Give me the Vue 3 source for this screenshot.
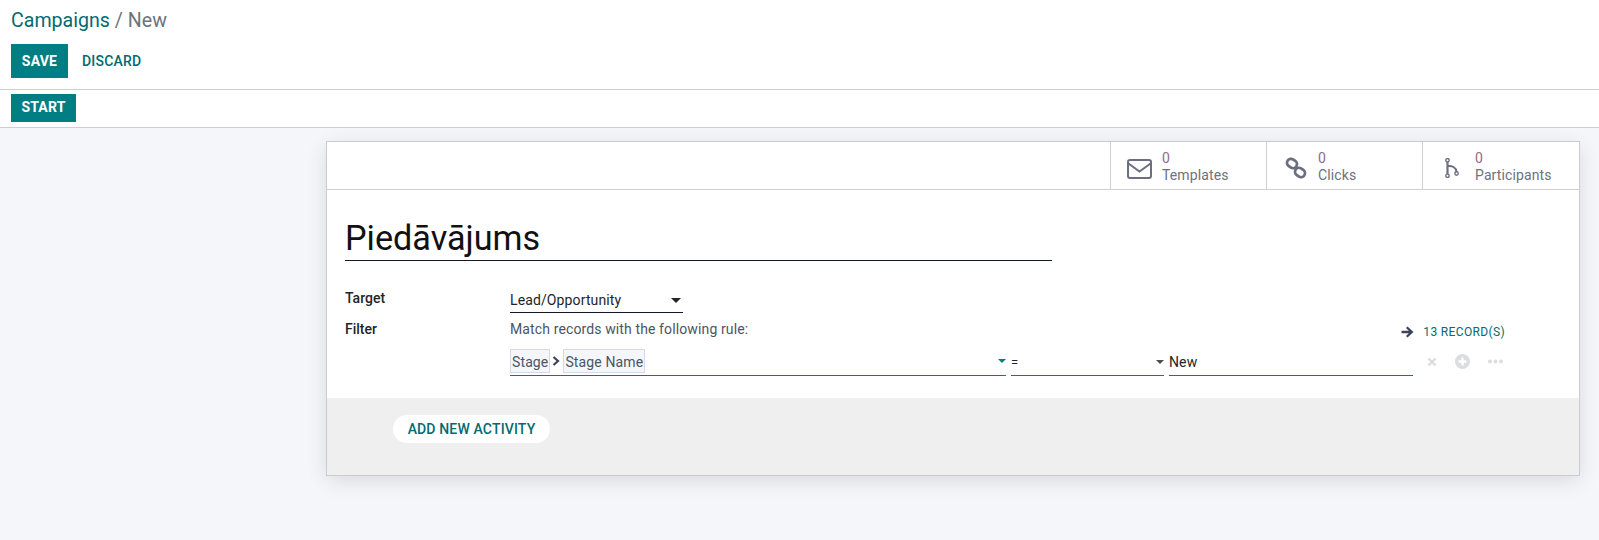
<script setup>
const stats = [
  { label: 'Templates', icon: 'mail' },
  { label: 'Clicks', icon: 'link' },
  { label: 'Participants', icon: 'branch' }
]
</script>

<template>
  <div class="page">
    <header class="head">
      <div class="crumbs"><span class="crumb-link">Campaigns</span><span class="crumb-rest"> / New</span></div>
      <div class="actions">
        <button class="btn save">SAVE</button>
        <button class="btn discard">DISCARD</button>
      </div>
    </header>
    <div class="status">
      <button class="btn start">START</button>
    </div>
    <main class="sheet-wrap">
      <section class="sheet">
        <div class="stats">
          <div v-for="s in stats" :key="s.label" class="stat" :class="'stat-' + s.icon">
            <svg v-if="s.icon === 'mail'" class="ico" width="25" height="20" viewBox="0 0 25 20" fill="none" stroke="#6b6f80" stroke-width="2">
              <rect x="1" y="1" width="23" height="18" rx="2" />
              <path d="M1.5 4.5 L12.5 12.5 L23.5 4.5" />
            </svg>
            <svg v-else-if="s.icon === 'link'" class="ico" width="22" height="22" viewBox="0 0 22 22" fill="none" stroke="#6b6f80" stroke-width="2.8">
              <rect x="1.8" y="2.5" width="10.4" height="8" rx="4" transform="rotate(35 7 6.5)" />
              <rect x="9.8" y="11.5" width="10.4" height="8" rx="4" transform="rotate(35 15 15.5)" />
            </svg>
            <svg v-else class="ico" width="14" height="20" viewBox="0 0 14 20" fill="none" stroke="#6b6f80" stroke-width="1.4">
              <circle cx="2.5" cy="2.2" r="1.7" />
              <circle cx="2.5" cy="17.8" r="1.7" />
              <circle cx="11.5" cy="15.5" r="1.7" />
              <path d="M2.5 4 V16" stroke-width="2.2" />
              <path d="M2.5 8 C7 7.5 11 9.5 11.5 13.8" stroke-width="2" />
            </svg>
            <div class="stat-text">
              <span class="num">0</span>
              <span class="lab">{{ s.label }}</span>
            </div>
          </div>
        </div>
        <div class="body">
          <div class="title">Piedāvājums</div>
          <div class="row target-row">
            <label class="label">Target</label>
            <div class="select">
              <span>Lead/Opportunity</span>
              <i class="caret dark"></i>
            </div>
          </div>
          <div class="row filter-row">
            <label class="label">Filter</label>
            <div class="filter">
              <div class="filter-head">
                <span class="rule">Match records with the following rule:</span>
                <span class="records">
                  <svg width="13" height="12" viewBox="0 0 13 12" fill="#3f4358"><path d="M6.5 0.5 L12.5 6 L6.5 11.5 L5 10 L7.8 7.2 H0.5 V4.8 H7.8 L5 2 Z" /></svg>
                  <span>13 RECORD(S)</span>
                </span>
              </div>
              <div class="rule-row">
                <div class="field path">
                  <span class="chip">Stage</span>
                  <svg class="chev" width="8" height="10" viewBox="0 0 8 10" fill="none" stroke="#3f4358" stroke-width="2.2"><path d="M1.5 1 L6 5 L1.5 9" /></svg>
                  <span class="chip">Stage Name</span>
                  <i class="caret teal small push"></i>
                </div>
                <div class="field op">
                  <span>=</span>
                  <i class="caret grey small push"></i>
                </div>
                <div class="field val">New</div>
                <div class="tools">
                  <svg width="10" height="10" viewBox="0 0 10 10" stroke="#dcdde1" stroke-width="2.4"><path d="M1.5 1.5 L8.5 8.5 M8.5 1.5 L1.5 8.5" /></svg>
                  <svg width="15" height="15" viewBox="0 0 15 15"><circle cx="7.5" cy="7.5" r="7.5" fill="#dcdde1" /><path d="M7.5 3.5 V11.5 M3.5 7.5 H11.5" stroke="#fff" stroke-width="2.4" /></svg>
                  <svg width="15" height="5" viewBox="0 0 15 5" fill="#dcdde1"><circle cx="2" cy="2.5" r="2" /><circle cx="7.5" cy="2.5" r="2" /><circle cx="13" cy="2.5" r="2" /></svg>
                </div>
              </div>
            </div>
          </div>
        </div>
        <div class="band">
          <button class="pill">ADD NEW ACTIVITY</button>
        </div>
      </section>
    </main>
  </div>
</template>

<style>
html, body { margin: 0; background: #f5f6fa; }
</style>

<style scoped>
.page {
  font-family: Roboto, "Liberation Sans", sans-serif;
  font-size: 14px;
  letter-spacing: 0.12px;
  color: #4c4c4c;
  height: 540px;
  overflow: hidden;
  background: #f5f6fa;
}
.head {
  height: 90px;
  box-sizing: border-box;
  background: #fff;
  border-bottom: 1px solid #cdced6;
  padding: 8px 11px 0;
}
.crumbs { font-size: 19.6px; line-height: 26px; height: 36px; letter-spacing: 0; }
.crumb-link { color: #016b70; }
.crumb-rest { color: #6b7280; }
.actions { display: flex; align-items: center; gap: 0; }
.btn {
  font-family: inherit;
  font-weight: 500;
  font-size: 14px;
  letter-spacing: 0.2px;
  border: 0;
  padding: 0 0 1px;
  cursor: pointer;
}
.save { width: 57px; height: 34px; background: #017e84; color: #fff; font-weight: 700; }
.discard { margin-left: 14px; background: none; color: #016b70; height: 34px; }
.status {
  height: 38px;
  box-sizing: border-box;
  background: #fff;
  border-bottom: 1px solid #cdced6;
  padding: 4px 11px 0;
}
.start { width: 65px; height: 28px; background: #017e84; color: #fff; font-weight: 700; display: block; padding-bottom: 2px; }
.sheet-wrap { padding: 13px 19px 0 326px; }
.sheet {
  box-sizing: border-box;
  height: 335px;
  background: #fff;
  border: 1px solid #c9cad2;
  box-shadow: 0 5px 20px -1px rgba(0, 0, 0, 0.12);
  display: flex;
  flex-direction: column;
}
.stats {
  height: 48px;
  flex: none;
  box-sizing: border-box;
  border-bottom: 1px solid #cdced6;
  display: flex;
  justify-content: flex-end;
}
.stat {
  width: 156px;
  box-sizing: border-box;
  border-left: 1px solid #cdced6;
  display: flex;
  align-items: center;
  padding-left: 16px;
  gap: 10px;
}
.stat-branch { width: 157px; padding-left: 22px; gap: 16px; }
.stat-link { padding-left: 18px; gap: 11px; }
.stat-mail .ico { margin-top: 6px; }
.stat-link .ico { margin-top: 4px; }
.stat-branch .ico { margin-top: 4px; }
.stat-text { display: flex; flex-direction: column; align-self: flex-start; padding-top: 8px; }
.num { color: #875a7b; font-weight: 400; font-size: 14px; line-height: 17px; opacity: 0.9; }
.lab { color: #6b7280; font-size: 14px; line-height: 17px; }
.body { flex: 1; padding: 27px 0 0 18px; }
.title {
  width: 707px;
  height: 44px;
  box-sizing: border-box;
  border-bottom: 1px solid #111827;
  font-size: 34.2px;
  letter-spacing: 0;
  line-height: 43px;
  color: #111;
}
.row { display: flex; }
.label { width: 165px; flex: none; font-weight: 500; color: #212529; line-height: 20px; letter-spacing: 0; }
.target-row { margin-top: 27px; height: 31px; }
.select {
  width: 173px;
  height: 23px;
  box-sizing: border-box;
  border-bottom: 1px solid #111827;
  display: flex;
  align-items: center;
  justify-content: space-between;
  color: #212529;
  padding-right: 2px;
  margin-top: 2px;
  padding-bottom: 2px;
}
.caret { width: 0; height: 0; display: block; border-left: 5px solid transparent; border-right: 5px solid transparent; border-top: 5px solid #212529; }
.caret.small { border-left-width: 4px; border-right-width: 4px; border-top-width: 4px; }
.caret.teal { border-top-color: #017e84; }
.caret.grey { border-top-color: #4c4c4c; }
.push { margin-left: auto; }
.filter { width: 995px; }
.filter-head { display: flex; justify-content: space-between; height: 20px; line-height: 20px; }
.rule { color: #4b5563; }
.records { display: flex; align-items: center; gap: 9px; font-size: 12px; letter-spacing: 0.35px; color: #016b70; font-weight: 400; margin-top: 3px; height: 20px; }
.rule-row { display: flex; align-items: flex-start; gap: 5px; margin-top: 0; padding-top: 10px; }
.field {
  height: 27px;
  box-sizing: border-box;
  border-bottom: 1px solid #017e84;
  display: flex;
  align-items: center;
  color: #212529;
  padding-bottom: 0;
}
.path { width: 496px; padding: 0 0 2px; }
.op { width: 153px; padding-right: 0; font-size: 13px; }
.val { width: 244px; }
.chip {
  box-sizing: border-box;
  height: 24px;
  line-height: 24px;
  padding: 0 1px;
  background: #f5f6fa;
  border: 1px solid #d5d8e6;
  color: #4b5563;
}
.chev { margin: 0 3px 0 2px; }
.tools { display: flex; align-items: center; gap: 18px; margin-left: 9px; height: 27px; padding-bottom: 2px; box-sizing: border-box; }
.band {
  height: 77px;
  flex: none;
  background: #efefef;
  padding: 17px 0 0 66px;
  box-sizing: border-box;
}
.pill {
  display: block;
  width: 157px;
  height: 28px;
  background: #fff;
  border: 0;
  border-radius: 14px;
  font-family: inherit;
  font-size: 14px;
  font-weight: 500;
  letter-spacing: 0.15px;
  color: #016b70;
  padding: 0;
}
</style>
